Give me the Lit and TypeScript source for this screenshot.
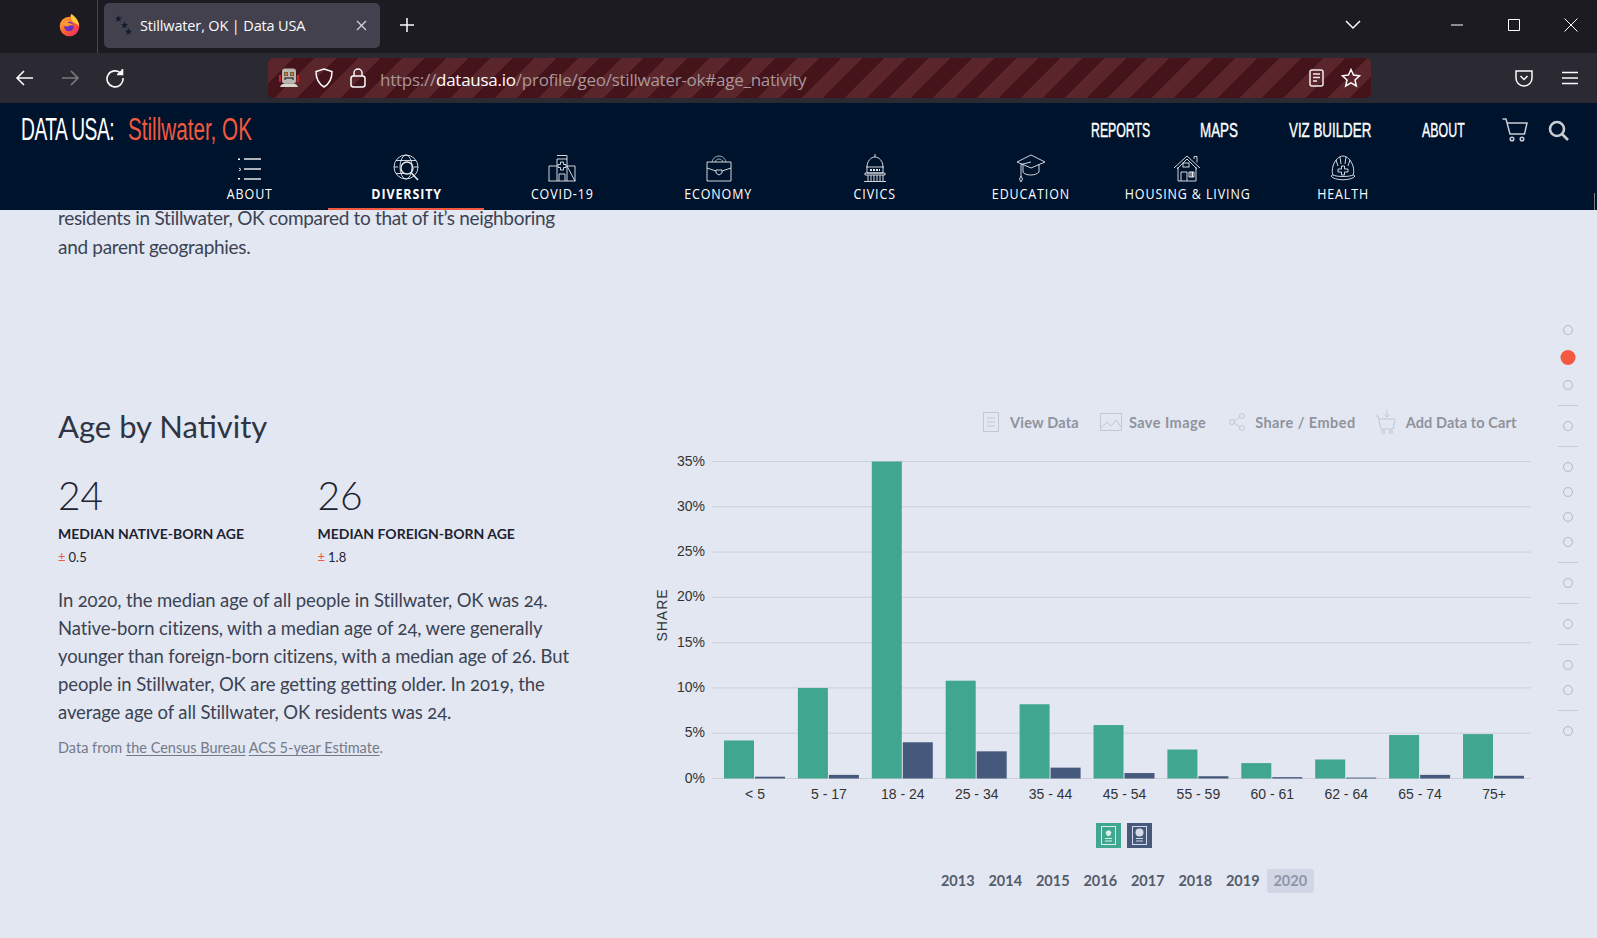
import { LitElement, html, svg, css } from 'lit';
import { customElement } from 'lit/decorators.js';

const GROUPS: [string, number, number][] = [
  ['< 5', 4.2, 0.2],
  ['5 - 17', 10, 0.4],
  ['18 - 24', 35, 4],
  ['25 - 34', 10.8, 3],
  ['35 - 44', 8.2, 1.2],
  ['45 - 54', 5.9, 0.6],
  ['55 - 59', 3.2, 0.25],
  ['60 - 61', 1.7, 0.15],
  ['62 - 64', 2.1, 0.1],
  ['65 - 74', 4.8, 0.4],
  ['75+', 4.9, 0.3],
];
const YEARS = ['2013', '2014', '2015', '2016', '2017', '2018', '2019', '2020'];

// Chart origin: svg starts at x=650, y=450 of the page
const Y0 = 328.5;
const PER_PCT = 9.057;
const GROUP_STEP = 73.9;

const navIcons = {
  about: svg`<path d="M8 5h17M8 15h17M8 25h17" stroke-width="2" opacity=".75"/><path d="M2 4.5h2v1.5H2zM2 24h2v1.5H2z" fill="#fff" stroke="none"/><path d="M3 14l2 1.5-2 1.5" stroke-width="1"/>`,
  diversity: svg`<circle cx="14" cy="13" r="12"/><ellipse cx="14" cy="13" rx="6" ry="12"/><path d="M2 13h4M22 13h4M4 6.500h20M4 19.500h8"/><circle cx="15" cy="14" r="6" stroke-width="1.400"/><path d="M19 18.500l7 7.500" stroke-width="1.600"/>`,
  covid: svg`<path d="M9 27V5h10v22M9 1.500h10V5M1 27V12h8M19 12h8v15zM.5 27h27"/><path d="M12.500 8h3v2.500H18v3h-2.500V16h-3v-2.500H10v-3h2.500z"/><path d="M11 27v-7h6v7"/>`,
  economy: svg`<path d="M2 8h24v19H2zM2 14l9 3M26 14l-9 3M11 16h6v3l-3 2-3-2z"/><path d="M7 8c1-4 4-6 7-6s6 2 7 6M10 8c1-2 2-3 4-3s3 1 4 3" opacity=".8"/>`,
  civics: svg`<path d="M14 0v3M6 13c0-6 4-10 8-10s8 4 8 10M5 13h18M6 13v6h16v-6M4 19h20v2H4zM7 21v6M10 21v6M13 21v6M16 21v6M19 21v6M22 21v6M3 27.500h22"/><path d="M9 16h10" stroke-dasharray="2 1" stroke-width="2"/>`,
  education: svg`<path d="M15 1l14 7-14 6L1 8z"/><path d="M7 11v7c2 4 13 4 16 0v-8M15 8l-10 2.500V22"/><path d="M5 22l-1.500 3L5 28l1.500-3z"/>`,
  housing: svg`<path d="M1 14L14 2l13 12M4 15L14 5l10 10M21 5V2.500h3v6"/><path d="M5 13v14h18V13M8 27v-9h6v9"/><rect x="10" y="9" width="6" height="4"/><path d="M16 18h5v5h-5zM18 18v5M19.500 18v5" stroke-width="1"/>`,
  health: svg`<path d="M4 21c-1-2-1-5 0-9 2-6 6-10 10-10s8 4 10 10c1 4 1 7 0 9M2 22c3 5 21 5 24 0-1-1-2-1-2-1-4 2-16 2-20 0 0 0-1 0-2 1z"/><path d="M11 3l1 7M17 3l-1 7M7 6l2 6M21 6l-2 6"/><path d="M12.500 12h3v3H19v3h-3.500v3h-3v-3H9v-3h3.500z"/>`,
};

const SUBNAV: [string, keyof typeof navIcons, number][] = [
  ['ABOUT', 'about', 28],
  ['DIVERSITY', 'diversity', 28],
  ['COVID-19', 'covid', 28],
  ['ECONOMY', 'economy', 28],
  ['CIVICS', 'civics', 28],
  ['EDUCATION', 'education', 30],
  ['HOUSING & LIVING', 'housing', 28],
  ['HEALTH', 'health', 28],
];

// side dots, "line" marks a divider between chapters
const DOTS = ['d', 'a', 'd', 'l', 'd', 'l', 'd', 'd', 'd', 'd', 'l', 'd', 'l', 'd', 'l', 'd', 'd', 'l', 'd'];

@customElement('app-root')
export class AppRoot extends LitElement {
  static styles = css`
    :host {
      display: block;
      width: 1597px;
      height: 938px;
      overflow: hidden;
      position: relative;
      font-family: 'Lato', sans-serif;
      background: #e3e7f2;
    }
    svg { display: block; }
    .tabbar {
      height: 53px;
      background: #1c1b22;
      display: flex;
      align-items: flex-start;
      color: #fbfbfe;
      font-family: 'Open Sans', sans-serif;
    }
    .ff {
      width: 98px;
      height: 53px;
      border-right: 1px solid #47464f;
      box-sizing: border-box;
      display: flex;
      justify-content: flex-end;
      padding: 12px 14px 0 0;
    }
    .tab {
      margin: 3px 0 0 6px;
      width: 276px;
      height: 45px;
      background: #42414d;
      border-radius: 5px;
      display: flex;
      align-items: center;
      box-sizing: border-box;
      padding: 0 13px 0 11px;
      font-size: 14.500px;
      gap: 8px;
    }
    .tab span { flex: 1; white-space: nowrap; letter-spacing: -.15px; }
    .plus { margin: 17px 0 0 19px; }
    .winctl {
      margin-left: auto;
      margin-right: -2px;
      display: flex;
      align-items: center;
      height: 50px;
    }
    .chev { margin-right: 67px; }
    .winbtn { width: 57px; display: flex; justify-content: center; }
    .toolbar {
      height: 50px;
      background: #2b2a33;
      display: flex;
      align-items: center;
    }
    .navbtns { display: flex; width: 268px; padding-left: 15px; gap: 25px; box-sizing: border-box; }
    .url {
      width: 1103px;
      height: 40px;
      border-radius: 5px;
      background: repeating-linear-gradient(-45deg, #45131a 0 15.500px, #5a252b 15.500px 31px);
      display: flex;
      align-items: center;
      box-sizing: border-box;
      padding: 0 10px 0 10px;
      font-family: 'Open Sans', sans-serif;
      font-size: 17px;
      color: #ffffff;
    }
    .url .addr { margin-left: 14px; padding-top: 2px; flex: 1; letter-spacing: -.25px; color: #a8989b; white-space: nowrap; }
    .url .addr b { font-weight: 400; color: #fff; }
    .url .robot { margin-right: 15px; }
    .url .shield { margin-right: 17px; }
    .url .star { margin-left: 17px; }
    .tools { display: flex; align-items: center; margin-left: auto; gap: 29px; padding-right: 19px; }
    .site {
      height: 107px;
      background: #00132d;
      position: relative;
      font-family: 'Liberation Sans', sans-serif;
      color: #fff;
    }
    .top {
      height: 46px;
      box-sizing: border-box;
      padding-top: 8px;
      display: flex;
      align-items: center;
    }
    .logo {
      margin-left: 21px;
      display: flex;
      align-items: baseline;
      font-size: 31px;
      white-space: nowrap;
    }
    .logo .brand { display: block; width: 106.500px; transform: scaleX(.62); transform-origin: left; letter-spacing: -.8px; }
    .logo .place { display: block; transform: scaleX(.666); transform-origin: left; color: #f2593f; }
    .links {
      margin-left: auto;
      display: flex;
      align-items: center;
      font-size: 20px;
      white-space: nowrap;
      -webkit-text-stroke: .4px #fff;
    }
    .links a { display: block; transform-origin: left; }
    .links .l1 { width: 59px; margin-right: 50px; transform: scaleX(.615); }
    .links .l2 { width: 38px; margin-right: 51px; transform: scaleX(.67); }
    .links .l3 { width: 82px; margin-right: 51px; transform: scaleX(.667); }
    .links .l4 { width: 43px; margin-right: 37px; transform: scaleX(.62); }
    .links .cart { margin-right: 20px; }
    .links .search { margin-right: 28px; }
    .sub {
      display: flex;
      padding-left: 172px;
    }
    .sub .item {
      width: 156.200px;
      height: 61px;
      box-sizing: border-box;
      display: flex;
      flex-direction: column;
      align-items: center;
      font-family: 'Open Sans', sans-serif;
      font-size: 14px;
      letter-spacing: 1px;
      white-space: nowrap;
      padding-top: 5px;
      position: relative;
    }
    .sub .label { margin-top: 1px; display: block; transform: scaleX(.89); line-height: 18px; }
    .sub .on { font-weight: 700; }
    .sub .on::after {
      content: '';
      position: absolute;
      left: 0;
      right: 0;
      bottom: 0;
      height: 2.500px;
      background: #f2593f;
    }
    .grip {
      position: absolute;
      right: 2px;
      bottom: 0;
      width: 1.500px;
      height: 17px;
      background: #777d86;
    }
    .page {
      height: 728px;
      overflow: hidden;
      position: relative;
      color: #3b4353;
    }
    .intro {
      margin: -6px 0 0 58px;
      font-size: 19px;
      line-height: 28.500px;
      letter-spacing: -.31px;
      width: 530px;
      color: #3b4353;
    }
    .topic {
      margin-top: 144px;
      display: flex;
      align-items: flex-start;
    }
    .left { width: 650px; padding: 0 0 0 58px; box-sizing: border-box; }
    h2 {
      margin: -1px 0 0;
      font-weight: 400;
      font-size: 31px;
      line-height: 44px;
      color: #2d3544;
    }
    .stats { display: flex; margin-top: 24px; }
    .stat { width: 259.500px; }
    .num { font-size: 39px; line-height: 46px; font-weight: 300; color: #1d2330; }
    .lab { font-size: 14px; font-weight: 700; line-height: 20px; margin-top: 6px; color: #1d2330; white-space: nowrap; }
    .moe { font-size: 13px; line-height: 20px; margin-top: 3px; color: #1d2330; }
    .moe i { font-style: normal; color: #f2593f; margin-right: 3px; }
    .desc { margin: 19px 0 0; font-size: 18.500px; letter-spacing: -.12px; line-height: 28px; width: 530px; font-variant-numeric: oldstyle-nums; }
    .src { margin: 12px 0 0; font-size: 14.500px; line-height: 20px; color: #737a88; }
    .src u { text-underline-offset: 2px; }
    .right { width: 900px; }
    .actions {
      display: flex;
      align-items: center;
      height: 24px;
      padding-left: 333px;
      color: #8f939c;
      font-weight: 700;
      font-size: 14.500px;
      letter-spacing: .2px;
      white-space: nowrap;
      margin-top: 5px;
    }
    .actions .doc { margin-right: 11px; }
    .actions .img { margin-right: 7px; }
    .actions .share { margin-right: 10px; }
    .actions .cart2 { margin-right: 9px; }
    .actions span { margin-right: 21px; }
    .actions span.save { margin-right: 23px; letter-spacing: .45px; }
    .actions span.embed { margin-right: 19px; letter-spacing: .45px; }
    .actions span.add { letter-spacing: .1px; }
    .chart { margin-top: 16px; }
    .chart text { font-family: 'Liberation Sans', sans-serif; font-size: 14px; fill: #333; }
    .legend { display: flex; gap: 6px; padding-left: 446px; margin-top: 11px; }
    .swatch { width: 25px; height: 25px; }
    .years {
      display: flex;
      padding-left: 284px;
      margin-top: 21px;
      font-size: 14.500px;
      font-weight: 700;
      color: #545c6b;
    }
    .year { width: 47.500px; height: 24px; line-height: 24px; text-align: center; border-radius: 3px; }
    .year.sel { background: #d0d6e4; color: #8e96a8; }
    .side {
      position: absolute;
      left: 1558px;
      top: 107.500px;
      width: 20px;
      display: flex;
      flex-direction: column;
      align-items: center;
    }
    .dot {
      width: 10px;
      height: 10px;
      border: 1.500px solid #b5b7bf;
      border-radius: 50%;
      box-sizing: border-box;
      margin: 7.500px 0;
    }
    .dot.act {
      width: 15px;
      height: 15px;
      border: none;
      background: #f2593f;
      margin: 7.500px 0;
      transform: translateX(-.5px);
    }
    .div { width: 20px; height: 1px; background: #c9cbd0; margin: 7.500px 0; }
  `;

  private ffLogo() {
    return html`<svg width="26" height="26" viewBox="0 0 26 26">
      <defs>
        <linearGradient id="ffg" x1="0" y1="0" x2="1" y2="1">
          <stop offset="0" stop-color="#ffb52e" />
          <stop offset=".55" stop-color="#ff5a30" />
          <stop offset="1" stop-color="#e3207f" />
        </linearGradient>
      </defs>
      <circle cx="12.500" cy="14.500" r="9.800" fill="url(#ffg)" />
      <path d="M14 2c3 1 8 6 8 12-3-3-5-3-7-5-1-2-2-4-1-7z" fill="#ffc93a" />
      <circle cx="12" cy="14.500" r="4.800" fill="#6b2fc4" />
      <path d="M5 11c3-3 6-3 9-2-2 0-3 1-3 2 3 0 5 1 6 3-1-1-4-1-5 0-3 1-6 0-7-3z" fill="#ff9a2e" />
    </svg>`;
  }

  private stars() {
    return html`<svg width="17" height="22" viewBox="0 0 17 22" fill="#141c30">
      <path d="M3.500 0l1 2.500 2.500.2-2 1.600.7 2.500-2.200-1.400-2.200 1.400.7-2.500-2-1.600 2.500-.2z" />
      <path d="M9.500 6.500l1 2.500 2.500.2-2 1.600.7 2.500-2.200-1.400-2.200 1.400.7-2.500-2-1.600 2.500-.2z" />
      <path d="M13.500 13l1 2.500 2.500.2-2 1.600.7 2.500-2.200-1.400-2.200 1.400.7-2.500-2-1.600 2.500-.2z" />
    </svg>`;
  }

  private robot() {
    return html`<svg class="robot" width="22" height="22" viewBox="0 0 22 22">
      <path d="M1 8h2v7H1zM19 8h2v7h-2z" fill="#c8202a" />
      <rect x="4" y="1.500" width="14" height="15" rx="3" fill="#b9b7b2" />
      <rect x="6" y="5" width="4" height="4" fill="#6e5a4a" />
      <rect x="12" y="5" width="4" height="4" fill="#6e5a4a" />
      <circle cx="8" cy="7" r="1.200" fill="#e07a20" />
      <circle cx="14" cy="7" r="1.200" fill="#e07a20" />
      <path d="M7 13v-2h8v2" fill="none" stroke="#4b3f38" stroke-width="1.500" />
      <path d="M2 20c1-3 3-3.500 5-3.500h8c2 0 4 .5 5 3.500z" fill="#d8d5cf" />
    </svg>`;
  }

  private chart() {
    const ticks = [0, 5, 10, 15, 20, 25, 30, 35];
    return html`<svg class="chart" width="900" height="362" viewBox="0 0 900 362">
      ${ticks.map((t) => {
        const y = Y0 - t * PER_PCT;
        return svg`
          <line x1="62" x2="881" y1=${y} y2=${y} stroke="#cdcfd5" stroke-width="1"></line>
          <text x="55" y=${y + 4} text-anchor="end">${t}%</text>`;
      })}
      <text transform="translate(17 165) rotate(-90)" text-anchor="middle" letter-spacing="1">SHARE</text>
      ${GROUPS.map(([label, a, b], i) => {
        const x = 74 + i * GROUP_STEP;
        return svg`
          <rect x=${x} y=${Y0 - a * PER_PCT} width="30" height=${a * PER_PCT} fill="#41a690"></rect>
          <rect x=${x + 31} y=${Y0 - b * PER_PCT} width="30" height=${b * PER_PCT} fill="#46597c"></rect>
          <text x=${x + 31} y="349" text-anchor="middle">${label}</text>`;
      })}
    </svg>`;
  }

  render() {
    return html`
      <div class="tabbar">
        <div class="ff">${this.ffLogo()}</div>
        <div class="tab">
          ${this.stars()}
          <span>Stillwater, OK | Data USA</span>
          <svg width="11" height="11" viewBox="0 0 11 11" stroke="#d6d6da" stroke-width="1.200"><path d="M1 1l9 9M10 1l-9 9" /></svg>
        </div>
        <svg class="plus" width="16" height="16" viewBox="0 0 16 16" stroke="#fbfbfe" stroke-width="1.500"><path d="M8 1v14M1 8h14" /></svg>
        <div class="winctl">
          <svg class="chev" width="16" height="10" viewBox="0 0 16 10" fill="none" stroke="#fbfbfe" stroke-width="1.500"><path d="M1 1l7 7 7-7" /></svg>
          <div class="winbtn"><svg width="12" height="2" viewBox="0 0 12 2" stroke="#fff"><path d="M0 1h12" /></svg></div>
          <div class="winbtn"><svg width="12" height="12" viewBox="0 0 12 12" fill="none" stroke="#fff"><path d="M.5.500h11v11H.5z" /></svg></div>
          <div class="winbtn"><svg width="14" height="14" viewBox="0 0 14 14" stroke="#fff"><path d="M.5.500l13 13M13.500.500l-13 13" /></svg></div>
        </div>
      </div>

      <div class="toolbar">
        <div class="navbtns">
          <svg width="20" height="20" viewBox="0 0 20 20" fill="none" stroke="#fbfbfe" stroke-width="1.600"><path d="M18 10H2M9 3l-7 7 7 7" /></svg>
          <svg width="20" height="20" viewBox="0 0 20 20" fill="none" stroke="#7b7a80" stroke-width="1.600"><path d="M2 10h16M11 3l7 7-7 7" /></svg>
          <svg width="20" height="20" viewBox="0 0 20 20" fill="none" stroke="#fbfbfe" stroke-width="1.600"><path d="M16 5.500A8 8 0 1 0 18 10" /><path d="M17.500 1v5.500H12" fill="#fbfbfe" /></svg>
        </div>
        <div class="url">
          ${this.robot()}
          <svg class="shield" width="18" height="20" viewBox="0 0 18 20" fill="none" stroke="#fbfbfe" stroke-width="1.500"><path d="M9 1l8 2.500c0 7-2 12-8 15.500C3 15.500 1 10.500 1 3.500z" /></svg>
          <svg width="16" height="20" viewBox="0 0 16 20" fill="none" stroke="#fbfbfe" stroke-width="1.500"><rect x="1" y="8" width="14" height="11" rx="2.500" /><path d="M4 8V5a4 4 0 0 1 8 0v3" /></svg>
          <div class="addr">https://<b>datausa.io</b>/profile/geo/stillwater-ok#age_nativity</div>
          <svg width="15" height="18" viewBox="0 0 15 18" fill="none" stroke="#f3e9ea" stroke-width="1.500"><rect x="1" y="1" width="13" height="16" rx="2" /><path d="M4 5h7M4 8.500h7M4 12h4" /></svg>
          <svg class="star" width="20" height="20" viewBox="0 0 20 20" fill="none" stroke="#fbfbfe" stroke-width="1.500"><path d="M10 1.500l2.500 5.600 6 .7-4.500 4.100 1.300 6.100-5.300-3.100-5.300 3.100L6 11.900 1.500 7.800l6-.7z" /></svg>
        </div>
        <div class="tools">
          <svg width="18" height="18" viewBox="0 0 18 18" fill="none" stroke="#fbfbfe" stroke-width="1.500"><path d="M1 2h16v6.500A8 8 0 0 1 9 17a8 8 0 0 1-8-8.500z" /><path d="M5.500 7L9 10.500 12.500 7" /></svg>
          <svg width="16" height="14" viewBox="0 0 16 14" stroke="#fbfbfe" stroke-width="1.500"><path d="M0 1.500h16M0 7h16M0 12.500h16" /></svg>
        </div>
      </div>

      <div class="site">
        <div class="top">
          <div class="logo"><span class="brand">DATA USA:</span><span class="place">Stillwater, OK</span></div>
          <div class="links">
            <a class="l1">REPORTS</a>
            <a class="l2">MAPS</a>
            <a class="l3">VIZ BUILDER</a>
            <a class="l4">ABOUT</a>
            <svg class="cart" width="26" height="24" viewBox="0 0 26 24" fill="none" stroke="#c9ccd2" stroke-width="1.500"><path d="M.5 1H4l4 15h14.500L25 5H5" /><circle cx="10" cy="21" r="1.800" /><circle cx="20" cy="21" r="1.800" /></svg>
            <svg class="search" width="21" height="21" viewBox="0 0 21 21" fill="none" stroke="#c9ccd2" stroke-width="2.600"><circle cx="9" cy="9" r="7" /><path d="M14 14l6 6" /></svg>
          </div>
        </div>
        <div class="sub">
          ${SUBNAV.map(
            ([label, key, size]) => html`
              <div class="item ${key === 'diversity' ? 'on' : ''}">
                <svg width=${size} height="30" viewBox="0 0 ${size} 30" fill="none" stroke="#e8eaee" stroke-width=".9">
                  ${navIcons[key]}
                </svg>
                <span class="label">${label}</span>
              </div>
            `,
          )}
        </div>
        <div class="grip"></div>
      </div>

      <div class="page">
        <p class="intro">
          residents in Stillwater, OK compared to that of it’s neighboring<br />and parent geographies.
        </p>
        <div class="topic">
          <div class="left">
            <h2>Age by Nativity</h2>
            <div class="stats">
              <div class="stat">
                <div class="num">24</div>
                <div class="lab">MEDIAN NATIVE-BORN AGE</div>
                <div class="moe"><i>±</i>0.5</div>
              </div>
              <div class="stat">
                <div class="num">26</div>
                <div class="lab">MEDIAN FOREIGN-BORN AGE</div>
                <div class="moe"><i>±</i>1.8</div>
              </div>
            </div>
            <p class="desc">
              In 2020, the median age of all people in Stillwater, OK was 24.<br />
              Native-born citizens, with a median age of 24, were generally<br />
              younger than foreign-born citizens, with a median age of 26. But<br />
              people in Stillwater, OK are getting getting older. In 2019, the<br />
              average age of all Stillwater, OK residents was 24.
            </p>
            <p class="src">Data from <u>the Census Bureau</u> <u>ACS 5-year Estimate</u>.</p>
          </div>
          <div class="right">
            <div class="actions">
              <svg class="doc" width="16" height="20" viewBox="0 0 16 20" fill="none" stroke="#c4c7cf"><path d="M.5.500h15v19H.5zM4 6h8M4 10h8M4 14h8" /></svg>
              <span>View Data</span>
              <svg class="img" width="22" height="18" viewBox="0 0 22 18" fill="none" stroke="#c4c7cf"><path d="M.5.500h21v17H.5zM1 15l6-6 4 4 5-6 5 7" /></svg>
              <span class="save">Save Image</span>
              <svg class="share" width="16" height="18" viewBox="0 0 16 18" fill="none" stroke="#c4c7cf"><circle cx="3" cy="9" r="2.500" /><circle cx="13" cy="3" r="2.500" /><circle cx="13" cy="15" r="2.500" /><path d="M5 8l6-4M5 10l6 4" /></svg>
              <span class="embed">Share / Embed</span>
              <svg class="cart2" width="22" height="24" viewBox="0 0 22 24" fill="none" stroke="#c4c7cf"><path d="M0 6h3l3 13h12l2-10H4M12 0v7M9.500 4.500L12 7l2.500-2.500" /><circle cx="8" cy="22" r="1.500" /><circle cx="16" cy="22" r="1.500" /></svg>
              <span class="add">Add Data to Cart</span>
            </div>
            ${this.chart()}
            <div class="legend">
              <svg class="swatch" viewBox="0 0 25 25" fill="none" stroke="#d9efe8"><rect width="25" height="25" fill="#41a690" stroke="none" /><rect x="5.500" y="3.500" width="14" height="18" /><path d="M9 15.500h7M9 18h7" /><path d="M12.500 7l3 2-1 3-2 1.500L10.500 12l-1-3z" fill="#d9efe8" stroke="none" /></svg>
              <svg class="swatch" viewBox="0 0 25 25" fill="none" stroke="#d3dae8"><rect width="25" height="25" fill="#46597c" stroke="none" /><rect x="5.500" y="3.500" width="14" height="18" /><path d="M9 15.500h7M9 18h7" /><circle cx="12.500" cy="9.500" r="4" fill="#d3dae8" stroke="none" /></svg>
            </div>
            <div class="years">
              ${YEARS.map((y) => html`<div class="year ${y === '2020' ? 'sel' : ''}">${y}</div>`)}
            </div>
          </div>
        </div>
        <div class="side">
          ${DOTS.map((d) =>
            d === 'l' ? html`<div class="div"></div>` : html`<div class="dot ${d === 'a' ? 'act' : ''}"></div>`,
          )}
        </div>
      </div>
    `;
  }
}

declare global {
  interface HTMLElementTagNameMap {
    'app-root': AppRoot;
  }
}
